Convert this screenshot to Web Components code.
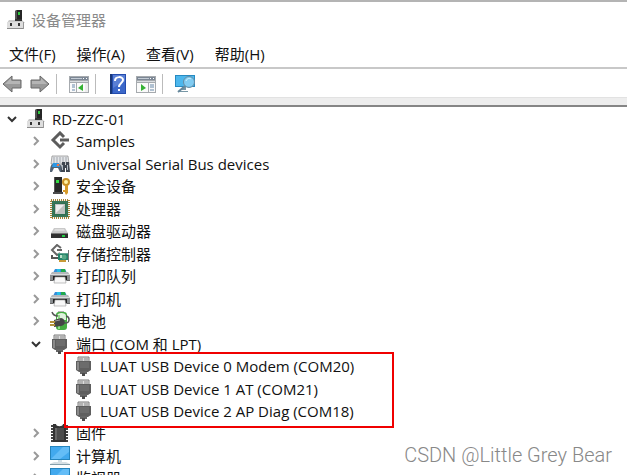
<!DOCTYPE html>
<html lang="zh-CN">
<head>
<meta charset="utf-8">
<title>设备管理器</title>
<style>
  body {
    margin: 0;
    height: 100vh;
    overflow: hidden;
    background: #fff;
    color: #111;
    font: 15px/22px "Open Sans", "Noto Sans CJK SC", sans-serif;
  }
</style>
</head>
<body>
<device-manager>
  <title-bar slot="title">设备管理器</title-bar>
  <menu-bar slot="menu" items="文件(F),操作(A),查看(V),帮助(H)"></menu-bar>
  <tool-bar slot="tools"></tool-bar>
  <tree-item icon="computer" label="RD-ZZC-01" open>
    <tree-item icon="samples" label="Samples"></tree-item>
    <tree-item icon="usb" label="Universal Serial Bus devices"></tree-item>
    <tree-item icon="security" label="安全设备"></tree-item>
    <tree-item icon="cpu" label="处理器"></tree-item>
    <tree-item icon="disk" label="磁盘驱动器"></tree-item>
    <tree-item icon="storage" label="存储控制器"></tree-item>
    <tree-item icon="printer" label="打印队列"></tree-item>
    <tree-item icon="printer" label="打印机"></tree-item>
    <tree-item icon="battery" label="电池"></tree-item>
    <tree-item icon="port" label="端口 (COM 和 LPT)" open>
      <mark-box>
        <tree-item icon="port" label="LUAT USB Device 0 Modem (COM20)" leaf></tree-item>
        <tree-item icon="port" label="LUAT USB Device 1 AT (COM21)" leaf></tree-item>
        <tree-item icon="port" label="LUAT USB Device 2 AP Diag (COM18)" leaf></tree-item>
      </mark-box>
    </tree-item>
    <tree-item icon="firmware" label="固件"></tree-item>
    <tree-item icon="monitor" label="计算机"></tree-item>
    <tree-item icon="monitor" label="监视器"></tree-item>
  </tree-item>
  <water-mark slot="mark">CSDN @Little Grey Bear</water-mark>
</device-manager>

<script>
const ICONS = {
  computer: `
    <path d="M9 1l2-1h5v11H9z" fill="#252525"/><path d="M9 1l2-1v10H9z" fill="#555"/>
    <path d="M12 2h2v3h-2z" fill="#30c840"/>
    <path d="M3 10h13l3 3H1z" fill="#c9c9c9"/><path d="M1 12h17v7H1z" fill="#dedede"/>
    <path d="M1 18h17v1H1z" fill="#8c8c8c"/><path d="M17 12h1v7h-1z" fill="#999"/>
    <path d="M4 13h2v3H4zM12 13h2v3h-2z" fill="#333"/><path d="M9 9h7v2H9z" fill="#333"/>`,
  samples: `
    <path d="M14 6L10 2 3 9l7 7 4-4" fill="none" stroke="#5c5c5c" stroke-width="3"/>
    <path d="M10 9h9" stroke="#5c5c5c" stroke-width="3"/>`,
  usb: `
    <path d="M2 2h16l1 8H1z" fill="#e3e5e8" stroke="#888" stroke-width=".7"/>
    <path d="M3 4h14M3 6h14M3 8h14" stroke="#a2a7ad" stroke-dasharray="2 1"/>
    <path d="M0 18c0-5 1-8 3-8h6c2 0 3 3 3 8h-2l-2-4H4l-2 4z" fill="#526273"/>
    <path d="M3 9h6l1 4H2z" fill="#2997e5"/><circle cx="8" cy="11" r="1.3" fill="#f37545"/>
    <path d="M12 8h3v3h1V8h3l1 10h-4v-4h-1v4h-4z" fill="#3e4650"/>
    <path d="M12 11h1v5h-1zM17 11h1v5h-1z" fill="#b0b9c3"/>`,
  security: `
    <path d="M4 1h8v16H4z" fill="#292929"/><path d="M4 1h1v16H4z" fill="#555"/>
    <path d="M6 4h3v3H6z" fill="#33dc43"/><path d="M3 16h10v2H3z" fill="#4c4c4c"/>
    <circle cx="16" cy="6" r="3" fill="#fff2a5" stroke="#c79027" stroke-width="2"/>
    <path d="M15 9h3v8l-2 2-1-2z" fill="#d69a29"/><path d="M13 14h2v2h-2z" fill="#d69a29"/>`,
  cpu: `
    <path d="M1 1h18v18H1z" fill="#eee" stroke="#a48336" stroke-width="2" stroke-dasharray="1 1"/>
    <path d="M2 2h16v16H2z" fill="#2f6f51"/><path d="M3 3h14v14H3z" fill="none" stroke="#407c5e"/>
    <path d="M5 5h10v10H5z" fill="#bfc2bf"/><path d="M6 6h8L6 14z" fill="#eee"/>`,
  disk: `
    <path d="M4 7h11l3 5H1z" fill="#c9c9c9"/><path d="M5 8h9l1 2H4z" fill="#ddd"/>
    <path d="M1 12h17v5H1z" fill="#303030"/><path d="M1 12h17v1H1z" fill="#777"/>
    <path d="M12 14h3v2h-3z" fill="#22ce45"/>`,
  storage: `
    <path d="M11 4L7 1 2 6l5 5 3-2M7 6h5" fill="none" stroke="#666" stroke-width="2"/>
    <path d="M2 11v3h7" stroke="#555" stroke-width="2" fill="none"/>
    <path d="M8 9h11v7H8z" fill="#23836a"/><path d="M8 9h11v1H8z" fill="#64a591"/>
    <circle cx="14" cy="13" r="2.5" fill="#59a886"/><path d="M10 11h2v3h-2z" fill="#bce1cb"/>
    <path d="M9 16h7v2H9z" fill="#c79a38"/><path d="M18 6h1v12h-1z" fill="#777"/>`,
  printer: `
    <path d="M5 3h10l2 4H3z" fill="#368dda"/><path d="M7 3h3v3H7z" fill="#27bfe7"/><path d="M11 3h4l1 4h-5z" fill="#20a94c"/>
    <path d="M2 6h16l2 3H0z" fill="#b4b8bb"/><path d="M0 8h20v7H0z" fill="#8b8f92"/>
    <path d="M0 8h20v1H0z" fill="#d9dcdd"/><path d="M3 10h14v4H3z" fill="#242424"/>
    <path d="M5 11h10l1 6H4z" fill="#f8f8f8" stroke="#999" stroke-width=".6"/><path d="M0 14h3v1H0zM17 14h3v1h-3z" fill="#666"/>`,
  battery: `
    <path d="M8 0h6v2H8z" fill="#b5b5b5"/><rect x="6" y="1" width="11" height="18" rx="3" fill="#45ac40"/>
    <path d="M7 5c0-4 9-4 9 0v4H7z" fill="#dff2dd"/><path d="M9 4v14" stroke="#92dc8a" stroke-width="2"/>
    <path d="M2 1c1 3 3 4 6 4M13 12c8 1 7-6 3-7" fill="none" stroke="#555" stroke-width="1.5"/>
    <path d="M4 9l7-2c5 1 5 7 0 8l-7 1z" fill="#454545"/><path d="M5 10l5-1" stroke="#999"/>
    <path d="M0 11h5M0 14h5" stroke="#b1913a" stroke-width="2"/>`,
  port: `
    <path d="M4 1h11v6H4z" fill="#dedede" stroke="#7c7c7c"/>
    <path d="M6 2v3M8 2v3M11 2v3M13 2v3" stroke="#888"/>
    <path d="M2 5h15v9l-3 2H5l-3-2z" fill="#5f5f5f"/><path d="M3 6h2v8H3z" fill="#8a8a8a"/>
    <path d="M6 7h9M6 9h9M6 11h9" stroke="#7b7b7b"/>
    <path d="M6 15h7v3H6z" fill="#666"/><path d="M8 17h3v3H8z" fill="#4c4c4c"/>`,
  firmware: `
    <path d="M2 2v17M17 2v17" stroke="#444" stroke-width="2" stroke-dasharray="2 1"/>
    <path d="M3 1h3c0 3 7 3 7 0h3v18H3z" fill="#333"/><path d="M5 5h9v12H5z" fill="#4d4d4d"/>
    <path d="M5 5h2v12H5z" fill="#666"/>`,
  monitor: `
    <path d="M0 0h20v14H0z" fill="#2585be"/><path d="M1 1h18v12H1z" fill="#42a9ee"/>
    <path d="M13 1h6v5l-9 7H1z" fill="#64bdf7"/><path d="M8 14h4v2H8z" fill="#d3dee4"/>
    <path d="M4 16h12l4 2H0z" fill="#d7dfe3"/><path d="M0 18h20v1H0z" fill="#86a0ac"/>`,
  back: `
    <path d="M1 10l9-8v4h9v8h-9v4z" fill="#999" stroke="#696969" stroke-linejoin="round"/>
    <path d="M3 10l6-6v3h9v3z" fill="#b5b5b5"/>`,
  forward: `
    <path d="M19 10l-9-8v4H1v8h9v4z" fill="#999" stroke="#696969" stroke-linejoin="round"/>
    <path d="M17 10l-6-6v3H2v3z" fill="#b5b5b5"/>`,
  tree: `
    <path d="M0 2h20v17H0z" fill="#a6aaae"/><path d="M1 3h18v3H1z" fill="#7c8795"/>
    <path d="M2 4h11v1H2z" fill="#c4ccd5"/><path d="M14 4h1v1h-1zM17 4h1v1h-1z" fill="#fff"/>
    <path d="M1 7h18v1H1z" fill="#d9dde0"/><path d="M1 9h6v9H1zM8 9h11v9H8z" fill="#fafafa"/>
    <path d="M3 11h3M3 13h3M3 16h3" stroke="#6688a9"/><path d="M14 10v7l-5-3z" fill="#35b133"/>
    <path d="M16 9h3v9h-3z" fill="#ededed"/>`,
  pane: `
    <path d="M0 2h20v17H0z" fill="#a6aaae"/><path d="M1 3h18v3H1z" fill="#7c8795"/>
    <path d="M2 4h11v1H2z" fill="#c4ccd5"/><path d="M14 4h1v1h-1zM17 4h1v1h-1z" fill="#fff"/>
    <path d="M1 7h18v1H1z" fill="#d9dde0"/><path d="M1 9h11v9H1zM13 9h6v9h-6z" fill="#fafafa"/>
    <path d="M14 11h4M14 13h4M14 16h4" stroke="#6688a9"/><path d="M5 10v7l5-3z" fill="#35b133"/>`,
  help: `
    <path d="M2 0h16v20H2z" fill="#244cae"/><path d="M5 1h12v18H5z" fill="#3c68c9"/>
    <path d="M2 0h2v20H2z" fill="#193878"/><path d="M5 1h12v6L5 14z" fill="#597fd4"/>
    <path d="M7 7c0-5 8-5 8-1 0 3-4 3-4 7" fill="none" stroke="#fff" stroke-width="2"/><path d="M10 15h2v2h-2z" fill="#fff"/>`,
  scan: `
    <path d="M0 1h20v12H0z" fill="#278ac1"/><path d="M1 2h18v10H1z" fill="#4cb7ed"/>
    <path d="M7 13h4v3H7zM3 17h10v1H3z" fill="#7897a6"/>
    <path d="M10 12l-7 6" stroke="#66889c" stroke-width="2"/>
    <circle cx="14" cy="8" r="5.5" fill="#8bd0f2" fill-opacity=".85" stroke="#668ca4"/>
    <path d="M11 7c1-3 4-3 5-2" fill="none" stroke="#d5f4ff"/>`
};

class DeviceIcon extends HTMLElement {
  connectedCallback() {
    this.attachShadow({ mode: "open" }).innerHTML = `
    <style>
      :host { display: block; width: 20px; height: 20px; flex: none; }
      svg { display: block; width: 100%; height: 100%; }
    </style>
    <svg viewBox="0 0 20 20" aria-hidden="true">${ICONS[this.getAttribute("name")]}</svg>`;
  }
}

class DeviceManager extends HTMLElement {
  connectedCallback() {
    this.attachShadow({ mode: "open" }).innerHTML = `
    <style>
      :host {
        position: relative;
        display: flex;
        flex-direction: column;
        height: 100%;
        box-sizing: border-box;
        border-top: 2px solid #b4b4b4;
      }
      .edge {
        height: 7px;
        background: #ededed;
        border-top: 1px solid #e2e2e2;
        border-bottom: 2px solid #858585;
      }
      main {
        flex: 1;
        min-height: 0;
        overflow: hidden;
      }
    </style>
    <slot name="title"></slot>
    <slot name="menu"></slot>
    <slot name="tools"></slot>
    <div class="edge"></div>
    <main role="tree"><slot></slot></main>
    <slot name="mark"></slot>`;
  }
}

class TitleBar extends HTMLElement {
  connectedCallback() {
    this.attachShadow({ mode: "open" }).innerHTML = `
    <style>
      :host {
        display: flex;
        align-items: center;
        gap: 5px;
        height: 36px;
        padding-left: 6px;
        color: #8a8a8a;
      }
    </style>
    <device-icon name="computer"></device-icon>
    <span><slot></slot></span>`;
  }
}

class MenuBar extends HTMLElement {
  connectedCallback() {
    const items = this.getAttribute("items").split(",");
    this.attachShadow({ mode: "open" }).innerHTML = `
    <style>
      :host {
        display: flex;
        align-items: end;
        gap: 21px;
        height: 27px;
        padding: 0 9px 2px;
        border-bottom: 2px solid #c8c8c8;
      }
      button {
        padding: 0;
        border: 0;
        background: none;
        color: inherit;
        font: inherit;
      }
    </style>
    ${items.map((item) => `<button>${item}</button>`).join("")}`;
  }
}

class ToolBar extends HTMLElement {
  connectedCallback() {
    this.attachShadow({ mode: "open" }).innerHTML = `
    <style>
      :host {
        display: flex;
        align-items: center;
        height: 26px;
        padding: 2px 2px 0;
      }
      div {
        display: flex;
        gap: 8px;
        padding-right: 6px;
      }
      div + div {
        padding-left: 12px;
        border-left: 1px solid #bbb;
      }
      button {
        padding: 0;
        border: 0;
        background: none;
      }
    </style>
    <div>
      <button aria-label="后退"><device-icon name="back"></device-icon></button>
      <button aria-label="前进"><device-icon name="forward"></device-icon></button>
    </div>
    <div>
      <button aria-label="显示控制台树"><device-icon name="tree"></device-icon></button>
    </div>
    <div>
      <button aria-label="帮助"><device-icon name="help"></device-icon></button>
      <button aria-label="操作窗格"><device-icon name="pane"></device-icon></button>
    </div>
    <div>
      <button aria-label="扫描检测硬件改动"><device-icon name="scan"></device-icon></button>
    </div>`;
  }
}

class TreeItem extends HTMLElement {
  connectedCallback() {
    const open = this.hasAttribute("open");
    const arrow = open ? "M2 4l4 4 4-4" : "M4 2l4 4-4 4";
    const toggle = this.hasAttribute("leaf") ? "" : `
      <button aria-label="${open ? "折叠" : "展开"}">
        <svg viewBox="0 0 12 12"><path d="${arrow}"/></svg>
      </button>`;
    this.setAttribute("role", "treeitem");
    this.attachShadow({ mode: "open" }).innerHTML = `
    <style>
      :host { display: block; }
      .row {
        display: grid;
        grid-template-columns: 24px 24px 1fr;
        align-items: center;
        height: 22px;
        white-space: nowrap;
      }
      /* rows alternate between 22 and 23 pixels */
      :host(:nth-child(even)) .row { height: 23px; }
      button {
        display: grid;
        place-items: center;
        width: 24px;
        padding: 0;
        border: 0;
        background: none;
      }
      svg {
        width: 12px;
        height: 12px;
        fill: none;
        stroke: #999;
        stroke-width: 2;
      }
      :host([open]) svg { stroke: #333; }
      device-icon {
        grid-column: 2;
        justify-self: center;
      }
      span { padding-left: 4px; }
      .children { padding-left: 24px; }
    </style>
    <div class="row">
      ${toggle}
      <device-icon name="${this.getAttribute("icon")}"></device-icon>
      <span>${this.getAttribute("label")}</span>
    </div>
    <div class="children" role="group"><slot></slot></div>`;
  }
}

class MarkBox extends HTMLElement {
  connectedCallback() {
    this.attachShadow({ mode: "open" }).innerHTML = `
    <style>
      :host {
        display: block;
        position: relative;
      }
      .frame {
        position: absolute;
        inset: -3px auto -6px 16px;
        width: 330px;
        box-sizing: border-box;
        border: 2px solid #f00000;
        pointer-events: none;
      }
    </style>
    <slot></slot>
    <div class="frame"></div>`;
  }
}

class WaterMark extends HTMLElement {
  connectedCallback() {
    this.attachShadow({ mode: "open" }).innerHTML = `
    <style>
      :host {
        position: absolute;
        right: 15px;
        bottom: 8px;
        color: #888;
        font: 300 20px/24px Roboto, "Liberation Sans", sans-serif;
      }
    </style>
    <slot></slot>`;
  }
}

customElements.define("device-icon", DeviceIcon);
customElements.define("device-manager", DeviceManager);
customElements.define("title-bar", TitleBar);
customElements.define("menu-bar", MenuBar);
customElements.define("tool-bar", ToolBar);
customElements.define("tree-item", TreeItem);
customElements.define("mark-box", MarkBox);
customElements.define("water-mark", WaterMark);
</script>
</body>
</html>
